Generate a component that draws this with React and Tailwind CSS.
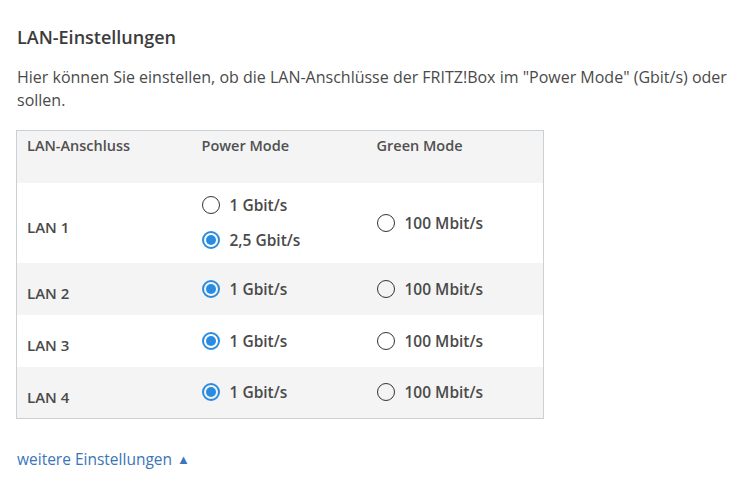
import { useState } from 'react';

const rows = [
  { name: 'LAN 1', power: ['1 Gbit/s', '2,5 Gbit/s'], selected: '2,5 Gbit/s' },
  { name: 'LAN 2', power: ['1 Gbit/s'], selected: '1 Gbit/s' },
  { name: 'LAN 3', power: ['1 Gbit/s'], selected: '1 Gbit/s' },
  { name: 'LAN 4', power: ['1 Gbit/s'], selected: '1 Gbit/s' },
];

const Radio = ({ checked, label, onClick }) => (
  <label className="flex items-center gap-[10px] cursor-pointer" onClick={onClick}>
    {checked ? (
      <span className="w-[18px] h-[18px] rounded-full border-2 border-[#2a8ce0] flex items-center justify-center">
        <span className="w-[10px] h-[10px] rounded-full bg-[#2a8ce0]" />
      </span>
    ) : (
      <span className="w-[18px] h-[18px] rounded-full border-[1.5px] border-[#333]" />
    )}
    <span className="font-semibold text-[15.5px] leading-[20px] text-[#4a4a4a]">{label}</span>
  </label>
);

const App = () => {
  const [selection, setSelection] = useState(rows.map((r) => r.selected));

  return (
    <div className="w-[744px] h-[483px] overflow-hidden bg-white font-['Open_Sans','Noto_Sans',sans-serif] text-[#444]">
      <div className="pl-[17px] pt-[25px]">
        <h2 className="text-[18px] font-semibold text-[#3c3c3c] leading-[24px]">LAN-Einstellungen</h2>
        <p className="mt-[17px] text-[16px] leading-[23px] text-[#4a4a4a] whitespace-nowrap">
          Hier können Sie einstellen, ob die LAN-Anschlüsse der FRITZ!Box im "Power Mode" (Gbit/s) oder
          <br />
          sollen.
        </p>

        {/* Ports */}
        <table className="mt-[18px] -ml-px w-[528px] border border-[#c9d0d6] border-collapse table-fixed">
          <thead>
            <tr className="bg-[#f4f4f4] h-[52px] align-top">
              <th className="w-[175px] text-left font-semibold text-[14.5px] text-[#505050] pl-[10px] pt-[4px]">LAN-Anschluss</th>
              <th className="w-[175px] text-left font-semibold text-[14.5px] text-[#505050] pl-[10px] pt-[4px]">Power Mode</th>
              <th className="text-left font-semibold text-[14.5px] text-[#505050] pl-[10px] pt-[4px]">Green Mode</th>
            </tr>
          </thead>
          <tbody>
            {rows.map((row, i) => (
              <tr key={row.name} className={i % 2 === 0 ? 'bg-white' : 'bg-[#f4f4f4]'}>
                <td className={`pl-[10px] pt-[9px] font-semibold text-[15px] text-[#4a4a4a] ${row.power.length > 1 ? 'h-[80px]' : 'h-[52px]'}`}>
                  {row.name}
                </td>
                <td className="pl-[10px]">
                  <div className="flex flex-col gap-[15px]">
                    {row.power.map((p) => (
                      <Radio
                        key={p}
                        label={p}
                        checked={selection[i] === p}
                        onClick={() => setSelection(selection.map((s, j) => (j === i ? p : s)))}
                      />
                    ))}
                  </div>
                </td>
                <td className="pl-[10px]">
                  <Radio
                    label="100 Mbit/s"
                    checked={selection[i] === '100 Mbit/s'}
                    onClick={() => setSelection(selection.map((s, j) => (j === i ? '100 Mbit/s' : s)))}
                  />
                </td>
              </tr>
            ))}
          </tbody>
        </table>

        <a href="#" className="mt-[29px] inline-flex items-center gap-[5px] text-[15.5px] text-[#3a76b8]">
          weitere Einstellungen
          <span className="text-[13px] leading-none">▲</span>
        </a>
      </div>
    </div>
  );
};

export default App;
